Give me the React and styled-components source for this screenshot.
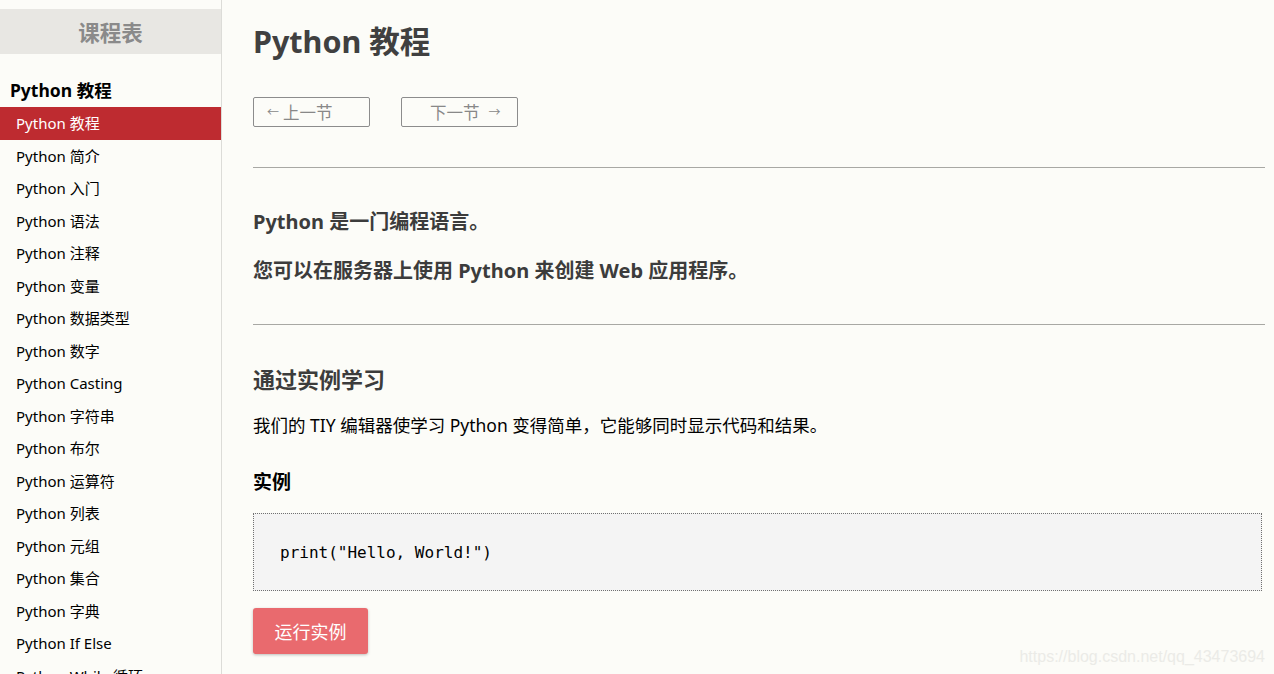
import React from "react";
import styled, { createGlobalStyle } from "styled-components";

const GlobalStyle = createGlobalStyle`
  html, body {
    margin: 0;
    padding: 0;
    height: 100%;
    overflow: hidden;
    background: #fcfcf8;
  }
  body {
    font-family: "Noto Sans", "Noto Sans CJK SC", sans-serif;
    color: #000;
  }
`;

const lessons = [
  "Python 教程",
  "Python 简介",
  "Python 入门",
  "Python 语法",
  "Python 注释",
  "Python 变量",
  "Python 数据类型",
  "Python 数字",
  "Python Casting",
  "Python 字符串",
  "Python 布尔",
  "Python 运算符",
  "Python 列表",
  "Python 元组",
  "Python 集合",
  "Python 字典",
  "Python If Else",
  "Python While 循环",
  "Python For 循环",
];

const App = () => {
  return (
    <Page>
      <GlobalStyle />
      <Sidebar>
        <SideHeader>课程表</SideHeader>
        <SideTitle>Python 教程</SideTitle>
        {lessons.map((name, i) => (
          <SideItem key={name} active={i === 0}>
            {name}
          </SideItem>
        ))}
      </Sidebar>
      <Main>
        <H1>Python 教程</H1>
        <NavRow>
          <NavButton>
            <Arrow>&larr;</Arrow>上一节
          </NavButton>
          <NavButton right>
            下一节<Arrow>&rarr;</Arrow>
          </NavButton>
        </NavRow>
        <Rule />
        <Intro>
          <Lead>Python 是一门编程语言。</Lead>
          <Lead>您可以在服务器上使用 Python 来创建 Web 应用程序。</Lead>
        </Intro>
        <Rule />
        <H2>通过实例学习</H2>
        <Para>我们的 TIY 编辑器使学习 Python 变得简单，它能够同时显示代码和结果。</Para>
        <H3>实例</H3>
        <CodeBox>
          <Code>print("Hello, World!")</Code>
        </CodeBox>
        <RunButton>运行实例</RunButton>
      </Main>
      <Watermark>https://blog.csdn.net/qq_43473694</Watermark>
    </Page>
  );
};

export default App;

const Page = styled.div`
  display: flex;
  height: 100vh;
  position: relative;
  overflow: hidden;
`;

const Sidebar = styled.nav`
  width: 221px;
  flex-shrink: 0;
  border-right: 1px solid #dcdcd8;
  padding-top: 9px;
  overflow: hidden;
`;

const SideHeader = styled.div`
  height: 45px;
  background: #e8e7e3;
  color: #8a8a8a;
  font-size: 21.5px;
  font-weight: 700;
  display: flex;
  align-items: center;
  justify-content: center;
`;

const SideTitle = styled.div`
  height: 53px;
  box-sizing: border-box;
  padding: 23px 0 0 10px;
  font-size: 17.5px;
  font-weight: 700;
  line-height: 26px;
`;

const SideItem = styled.div`
  height: 32.5px;
  line-height: 32.5px;
  padding-left: 16px;
  font-size: 15px;
  white-space: nowrap;
  background: ${(p) => (p.active ? "#be2b30" : "transparent")};
  color: ${(p) => (p.active ? "#fff" : "#000")};
`;

const Main = styled.main`
  flex: 1;
  padding: 18px 9px 0 31px;
  color: #404040;
`;

const H1 = styled.h1`
  margin: 0;
  font-size: 30.5px;
  font-weight: 700;
  line-height: 46px;
`;

const NavRow = styled.div`
  display: flex;
  gap: 31px;
  margin-top: 33px;
`;

const NavButton = styled.div`
  width: 117px;
  height: 30px;
  box-sizing: border-box;
  border: 1px solid #8c8c8c;
  border-radius: 2px;
  color: #888;
  font-size: 16.5px;
  display: flex;
  align-items: center;
  padding-left: ${(p) => (p.right ? "28px" : "13px")};
  gap: ${(p) => (p.right ? "9px" : "4px")};
`;

const Arrow = styled.span`
  font-size: 12px;
`;

const Rule = styled.hr`
  margin: 40px 0 0;
  border: none;
  border-top: 1px solid #a8a8a4;
  height: 0;
`;

const Intro = styled.div`
  display: flex;
  flex-direction: column;
  gap: 22px;
  padding-top: 40px;
`;

const Lead = styled.p`
  margin: 0;
  font-size: 20px;
  font-weight: 700;
  line-height: 27px;
  color: #3c3c3c;
`;

const H2 = styled.h2`
  margin: 40px 0 0;
  font-size: 22px;
  font-weight: 700;
  line-height: 28px;
  color: #3c3c3c;
`;

const Para = styled.p`
  margin: 20px 0 0;
  font-size: 17.5px;
  line-height: 24px;
  color: #000;
`;

const H3 = styled.h3`
  margin: 33px 0 0;
  font-size: 19px;
  font-weight: 700;
  line-height: 24px;
  color: #000;
`;

const CodeBox = styled.div`
  margin: 19px 3px 0 0;
  height: 78px;
  box-sizing: border-box;
  border: 1px dotted #707070;
  background: #f4f4f4;
  display: flex;
  align-items: center;
  padding-left: 26px;
`;

const Code = styled.code`
  font-family: "DejaVu Sans Mono", "Liberation Mono", monospace;
  font-size: 16px;
  color: #000;
`;

const RunButton = styled.div`
  margin-top: 17px;
  width: 115px;
  height: 46px;
  background: #e96a6e;
  color: #fff;
  border-radius: 3px;
  box-shadow: 0 1px 3px rgba(0, 0, 0, 0.25);
  font-size: 18px;
  display: flex;
  align-items: center;
  justify-content: center;
`;

const Watermark = styled.div`
  position: absolute;
  right: 9px;
  bottom: 8px;
  font-family: "Liberation Sans", Arial, sans-serif;
  font-size: 16px;
  color: #ebebe7;
`;
